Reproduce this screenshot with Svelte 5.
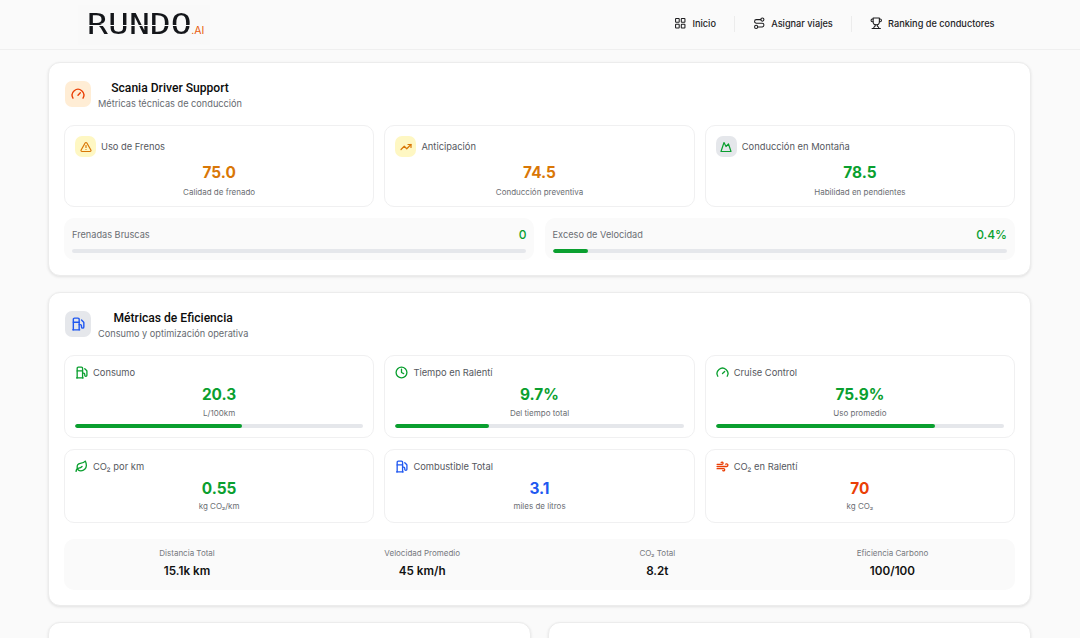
<script>
  const I = {
    gauge: ['<path d="m12 14 4-4"/><path d="M3.34 19a10 10 0 1 1 17.32 0"/>'],
    alert: ['<path d="m21.73 18-8-14a2 2 0 0 0-3.48 0l-8 14A2 2 0 0 0 4 21h16a2 2 0 0 0 1.73-3"/><path d="M12 9v4"/><path d="M12 17h.01"/>'],
    trend: ['<polyline points="22 7 13.5 15.5 8.5 10.5 2 17"/><polyline points="16 7 22 7 22 13"/>'],
    mountain: ['<path d="m8 3 4 8 5-5 5 15H2L8 3z"/>'],
    fuel: ['<line x1="3" x2="15" y1="22" y2="22"/><line x1="4" x2="14" y1="9" y2="9"/><path d="M14 22V4a2 2 0 0 0-2-2H6a2 2 0 0 0-2 2v18"/><path d="M14 13h2a2 2 0 0 1 2 2v2a2 2 0 0 0 2 2a2 2 0 0 0 2-2V9.83a2 2 0 0 0-.59-1.42L18 5"/>'],
    clock: ['<circle cx="12" cy="12" r="10"/><polyline points="12 6 12 12 16 14"/>'],
    leaf: ['<path d="M11 20A7 7 0 0 1 9.8 6.1C15.5 5 17 4.48 19 2c1 2 2 4.18 2 8 0 5.5-4.78 10-10 10Z"/><path d="M2 21c0-3 1.85-5.36 5.08-6C9.5 14.52 12 13 13 12"/>'],
    wind: ['<path d="M17.7 7.7a2.5 2.5 0 1 1 1.8 4.3H2"/><path d="M9.6 4.6A2 2 0 1 1 11 8H2"/><path d="M12.6 19.4A2 2 0 1 0 14 16H2"/>'],
    grid: ['<rect width="7" height="7" x="3" y="3" rx="1"/><rect width="7" height="7" x="14" y="3" rx="1"/><rect width="7" height="7" x="14" y="14" rx="1"/><rect width="7" height="7" x="3" y="14" rx="1"/>'],
    route: ['<circle cx="6" cy="19" r="3"/><path d="M9 19h8.5a3.5 3.5 0 0 0 0-7h-11a3.5 3.5 0 0 1 0-7H15"/><circle cx="18" cy="5" r="3"/>'],
    trophy: ['<path d="M6 9H4.5a2.5 2.5 0 0 1 0-5H6"/><path d="M18 9h1.5a2.5 2.5 0 0 0 0-5H18"/><path d="M4 22h16"/><path d="M10 14.66V17c0 .55-.47.98-.97 1.21C7.85 18.75 7 20.24 7 22"/><path d="M14 14.66V17c0 .55.47.98.97 1.21C16.15 18.75 17 20.24 17 22"/><path d="M18 2H6v7a6 6 0 0 0 12 0V2Z"/>']
  };

  const nav = [
    { icon: 'grid', label: 'Inicio' },
    { icon: 'route', label: 'Asignar viajes' },
    { icon: 'trophy', label: 'Ranking de conductores' }
  ];

  const driver = [
    { icon: 'alert', box: 'yellow', tone: 'orange', label: 'Uso de Frenos', value: '75.0', sub: 'Calidad de frenado' },
    { icon: 'trend', box: 'yellow', tone: 'orange', label: 'Anticipación', value: '74.5', sub: 'Conducción preventiva' },
    { icon: 'mountain', box: 'gray', tone: 'green', label: 'Conducción en Montaña', value: '78.5', sub: 'Habilidad en pendientes' }
  ];

  const bars = [
    { label: 'Frenadas Bruscas', value: '0', pct: 0 },
    { label: 'Exceso de Velocidad', value: '0.4%', pct: 7.7 }
  ];

  const efficiency = [
    { icon: 'fuel', tone: 'green', label: 'Consumo', value: '20.3', sub: 'L/100km', pct: 58 },
    { icon: 'clock', tone: 'green', label: 'Tiempo en Ralentí', value: '9.7%', sub: 'Del tiempo total', pct: 32.5 },
    { icon: 'gauge', tone: 'green', label: 'Cruise Control', value: '75.9%', sub: 'Uso promedio', pct: 75.9 },
    { icon: 'leaf', tone: 'green', label: 'CO₂ por km', value: '0.55', sub: 'kg CO₂/km' },
    { icon: 'fuel', tone: 'blue', label: 'Combustible Total', value: '3.1', sub: 'miles de litros' },
    { icon: 'wind', tone: 'red', label: 'CO₂ en Ralentí', value: '70', sub: 'kg CO₂' }
  ];

  const summary = [
    { label: 'Distancia Total', value: '15.1k km' },
    { label: 'Velocidad Promedio', value: '45 km/h' },
    { label: 'CO₂ Total', value: '8.2t' },
    { label: 'Eficiencia Carbono', value: '100/100' }
  ];
</script>

{#snippet icon(name, size, sw = 2.4)}
  <svg class="ico" width={size} height={size} viewBox="0 0 24 24" fill="none" stroke="currentColor" stroke-width={sw} stroke-linecap="round" stroke-linejoin="round">{@html I[name][0]}</svg>
{/snippet}

<div class="page">
  <header class="topbar">
    <div class="logo"><span class="word">RUNDO</span><span class="ai">.AI</span></div>
    <nav class="nav">
      {#each nav as n, i}
        {#if i > 0}<span class="sep"></span>{/if}
        <a class="link">{@render icon(n.icon, 12.5, 2)}<span>{n.label}</span></a>
      {/each}
    </nav>
  </header>

  <main class="main">
    <section class="card">
      <div class="head">
        <div class="head-icon peach red">{@render icon('gauge', 14)}</div>
        <div class="head-text">
          <h2>Scania Driver Support</h2>
          <p>Métricas técnicas de conducción</p>
        </div>
      </div>
      <div class="grid3">
        {#each driver as d}
          <div class="mini driver">
            <div class="mini-head">
              <span class="mini-box {d.box} {d.tone}">{@render icon(d.icon, 12)}</span>
              <span class="mini-label">{d.label}</span>
            </div>
            <div class="value {d.tone}">{d.value}</div>
            <div class="sub">{d.sub}</div>
          </div>
        {/each}
      </div>
      <div class="grid2">
        {#each bars as b}
          <div class="stat">
            <div class="stat-row"><span>{b.label}</span><b class="green">{b.value}</b></div>
            <div class="track"><div class="fill" style="width:{b.pct}%"></div></div>
          </div>
        {/each}
      </div>
    </section>

    <section class="card">
      <div class="head">
        <div class="head-icon gray blue">{@render icon('fuel', 14)}</div>
        <div class="head-text">
          <h2>Métricas de Eficiencia</h2>
          <p>Consumo y optimización operativa</p>
        </div>
      </div>
      <div class="grid3 eff">
        {#each efficiency as e}
          <div class="mini">
            <div class="mini-head">
              <span class="tint {e.tone}">{@render icon(e.icon, 13)}</span>
              <span class="mini-label">{e.label}</span>
            </div>
            <div class="value {e.tone}">{e.value}</div>
            <div class="sub">{e.sub}</div>
            {#if e.pct}<div class="track mt"><div class="fill" style="width:{e.pct}%"></div></div>{/if}
          </div>
        {/each}
      </div>
      <div class="summary">
        {#each summary as s}
          <div class="sum">
            <div class="sum-label">{s.label}</div>
            <div class="sum-value">{s.value}</div>
          </div>
        {/each}
      </div>
    </section>

    <div class="bottom">
      <section class="card tall"></section>
      <section class="card tall"></section>
    </div>
  </main>
</div>

<style>
  :global(body) { margin: 0; background: #fafafa; }
  .page { height: 638px; overflow: hidden; background: #fafafa; font-family: Inter, "Liberation Sans", sans-serif; color: #111; }
  .topbar { height: 49px; border-bottom: 1px solid #efefef; display: flex; align-items: center; justify-content: space-between; padding: 0 85.5px 0 78px; }
  .logo { width: 132px; height: 40px; background: #f9f9f9; display: flex; align-items: flex-end; padding: 0 0 6px 9px; box-sizing: border-box; }
  .word { display: inline-block; font-family: "DejaVu Sans Mono", monospace; font-size: 29px; line-height: 29px; color: transparent; background: linear-gradient(to bottom, #14161a 0 15px, transparent 15px 16.5px, #14161a 16.5px 100%); background-clip: text; -webkit-background-clip: text; transform: scaleX(1.2); transform-origin: left center; margin-right: 17px; }
  .ai { font-size: 10.5px; line-height: 12px; color: #e8590c; margin-bottom: 2px; }
  .nav { display: flex; align-items: center; margin-bottom: 2px; }
  .link { display: flex; align-items: center; gap: 5.7px; font-size: 9.2px; font-weight: 500; color: #1d1d1f; }
  .ico { display: block; }
  .sep { width: 1px; height: 16px; background: #ececec; margin: 0 18px; }

  .main { padding: 12px 49px 0 48px; display: flex; flex-direction: column; gap: 16px; }
  .card { background: #fff; border: 1px solid #ececec; border-radius: 12px; box-shadow: 0 1px 3px rgba(0,0,0,.1); padding: 18px 15px 15px; box-sizing: border-box; }
  .head { display: flex; align-items: flex-start; gap: 7px; height: 29px; }
  .head-icon { width: 26px; height: 26px; margin-left: 1px; border-radius: 7px; display: flex; align-items: center; justify-content: center; }
  .peach { background: #ffedd5; }
  .gray { background: #e5e7eb; }
  .yellow { background: #fef7c3; }
  .head-text { display: flex; flex-direction: column; align-items: center; }
  h2 { margin: 0; font-family: Roboto, sans-serif; font-size: 12.1px; line-height: 14px; font-weight: 500; color: #0b0b0b; }
  .head-text p { margin: 3px 0 0; font-size: 9.2px; line-height: 11px; color: #666a70; }

  .grid3 { display: grid; grid-template-columns: repeat(3, 1fr); gap: 10.67px 10.2px; margin-top: 15px; }
  .eff { grid-template-rows: 83px 74px; }
  .mini { border: 1px solid #f0f0f1; border-radius: 10px; padding: 10px 10px 9px; background: #fff; text-align: center; box-sizing: border-box; }
  .driver { height: 82px; }
  .mini-head { display: flex; align-items: center; gap: 5px; }
  .mini-box { width: 21px; height: 21px; border-radius: 7px; display: flex; align-items: center; justify-content: center; }
  .tint { display: block; }
  .mini-label { font-size: 9.33px; color: #55585e; line-height: 13px; }
  .value { font-size: 15.4px; font-weight: 700; line-height: 20px; margin-top: 6px; }
  .sub { font-size: 8px; line-height: 10px; color: #6b6e73; margin-top: 3.5px; }
  .eff .value { margin-top: 6px; }
  .eff .sub { margin-top: 2.7px; }
  .green { color: #0a9f2f; }
  .orange { color: #d97706; }
  .blue { color: #2058f0; }
  .red { color: #ea3f06; }

  .track { height: 4px; background: #e5e7eb; border-radius: 2px; overflow: hidden; }
  .mt { margin-top: 6.3px; }
  .fill { height: 100%; background: #0a9f2f; border-radius: 2px; }

  .grid2 { display: grid; grid-template-columns: repeat(2, 1fr); gap: 10.2px; margin-top: 11px; }
  .stat { background: #fafafa; border-radius: 10px; padding: 9.5px 8px 7px; height: 42px; box-sizing: border-box; }
  .stat-row { display: flex; justify-content: space-between; align-items: center; font-size: 9.2px; line-height: 14px; color: #6b6e73; margin-bottom: 7.5px; }
  .stat-row b { font-size: 12px; font-weight: 500; }

  .summary { display: grid; grid-template-columns: repeat(4, 1fr); gap: 16px; background: #fafafa; border-radius: 10px; margin-top: 16.33px; height: 51.5px; padding: 9px 13px 0 13.5px; box-sizing: border-box; text-align: center; }
  .sum-label { font-size: 8px; line-height: 10px; color: #76797e; }
  .sum-value { font-size: 11.7px; line-height: 15px; font-weight: 600; color: #111; margin-top: 6px; }

  .bottom { display: grid; grid-template-columns: 1fr 1fr; gap: 17px; }
  .tall { height: 200px; }
</style>
